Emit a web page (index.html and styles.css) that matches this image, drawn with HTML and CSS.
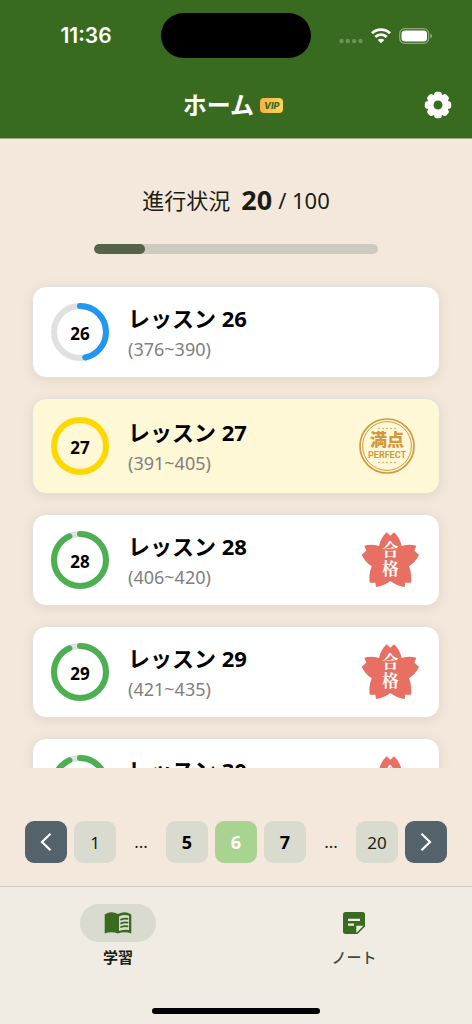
FILE: index.html
```html
<!DOCTYPE html>
<html lang="ja">
<head>
<meta charset="utf-8">
<meta name="viewport" content="width=device-width, initial-scale=1">
<title>ホーム</title>
<link rel="stylesheet" href="styles.css">
</head>
<body>
<svg class="defs" aria-hidden="true">
  <defs>
    <symbol id="flower" viewBox="16 20 180 180">
      <path fill="#e87062" d="M107 37L118 27Q135 42 141 68Q165 61 185 67L179 82L193 94Q184 115 163 129Q172 150 169 178L152 178L150 191Q126 188 107 173Q88 188 64 191L62 178L45 178Q42 150 51 129Q30 115 21 94L35 82L29 67Q49 61 73 68Q79 42 96 27Z"/>
      <text class="pass-text" x="107" y="99">合</text>
      <text class="pass-text" x="107" y="154">格</text>
    </symbol>
  </defs>
</svg>
<div class="app">
  <header class="header">
    <div class="status">
      <span class="time">11:36</span>
      <span class="island"></span>
      <span class="signals">
        <svg width="24" height="6" viewBox="0 0 24 6" fill="#6f9258"><circle cx="2.500" cy="3" r="2.200"/><circle cx="8.800" cy="3" r="2.200"/><circle cx="15.200" cy="3" r="2.200"/><circle cx="21.500" cy="3" r="2.200"/></svg>
        <svg class="wifi" width="20" height="16" viewBox="0 0 20 16" fill="none" stroke="#fff" stroke-width="2.800"><path d="M1 5.300a12.800 12.800 0 0 1 18 0M4.300 8.900a8.200 8.200 0 0 1 11.400 0"/><path d="M10 15.300L6.700 12a4.700 4.700 0 0 1 6.600 0Z" fill="#fff" stroke="none"/></svg>
        <svg width="34" height="16" viewBox="0 0 34 16"><rect x=".7" y=".7" width="29" height="14.600" rx="4.800" fill="none" stroke="#8cab7b" stroke-width="1.200"/><rect x="2.500" y="2.500" width="25.500" height="11" rx="3.200" fill="#fff"/><path d="M31.300 5.500a2.600 2.600 0 0 1 0 5Z" fill="#8cab7b"/></svg>
      </span>
    </div>
    <div class="titlebar">
      <span></span>
      <div class="title"><h1>ホーム</h1><span class="vip">VIP</span></div>
      <button class="settings" aria-label="設定">
        <svg width="28" height="28" viewBox="-14 -14 28 28"><g fill="#fff"><path fill-rule="evenodd" d="M-11 0a11 11 0 1 0 22 0a11 11 0 1 0-22 0M-4.500 0a4.500 4.500 0 1 1 9 0a4.500 4.500 0 1 1-9 0"/><rect id="tooth" x="-3.700" y="-13.200" width="7.400" height="6" rx="2.500"/><use href="#tooth" transform="rotate(45)"/><use href="#tooth" transform="rotate(90)"/><use href="#tooth" transform="rotate(135)"/><use href="#tooth" transform="rotate(180)"/><use href="#tooth" transform="rotate(225)"/><use href="#tooth" transform="rotate(270)"/><use href="#tooth" transform="rotate(315)"/></g></svg>
      </button>
    </div>
  </header>

  <main class="main">
    <section class="progress">
      <label class="progress-label" for="total"><span>進行状況</span><strong>20</strong><span>/ 100</span></label>
      <progress id="total" class="bar" max="100" value="18"></progress>
    </section>

    <ul class="lessons">
      <li class="card">
        <div class="ring"><svg viewBox="0 0 58 58"><circle class="track" cx="29" cy="29" r="26"/><circle class="arc blue" cx="29" cy="29" r="26" pathLength="100" stroke-dasharray="46.700 100"/></svg><span>26</span></div>
        <div class="info"><h2>レッスン 26</h2><p>(376~390)</p></div>
      </li>
      <li class="card perfect">
        <div class="ring"><svg viewBox="0 0 58 58"><circle class="arc gold" cx="29" cy="29" r="26"/></svg><span>27</span></div>
        <div class="info"><h2>レッスン 27</h2><p>(391~405)</p></div>
        <svg class="stamp" viewBox="0 0 60 60" role="img" aria-label="満点">
          <circle cx="30" cy="30" r="27" fill="none" stroke="#d3993f" stroke-width="1.700"/>
          <circle cx="30" cy="30" r="24.400" fill="none" stroke="#d3993f" stroke-width="1"/>
          <path d="M22 12.500h16.100M22 46.500h16.100" stroke="#d3993f" stroke-width="1.600" stroke-linecap="round" stroke-dasharray="0 4"/>
          <text class="perfect-text" x="30" y="30">満点</text>
          <text class="perfect-sub" x="30" y="42">PERFECT</text>
        </svg>
      </li>
      <li class="card">
        <div class="ring"><svg viewBox="0 0 58 58"><circle class="track" cx="29" cy="29" r="26"/><circle class="arc green" cx="29" cy="29" r="26" pathLength="100" stroke-dasharray="93.300 100"/></svg><span>28</span></div>
        <div class="info"><h2>レッスン 28</h2><p>(406~420)</p></div>
        <svg class="stamp pass" role="img" aria-label="合格"><use href="#flower"/></svg>
      </li>
      <li class="card">
        <div class="ring"><svg viewBox="0 0 58 58"><circle class="track" cx="29" cy="29" r="26"/><circle class="arc green" cx="29" cy="29" r="26" pathLength="100" stroke-dasharray="93.300 100"/></svg><span>29</span></div>
        <div class="info"><h2>レッスン 29</h2><p>(421~435)</p></div>
        <svg class="stamp pass" role="img" aria-label="合格"><use href="#flower"/></svg>
      </li>
      <li class="card">
        <div class="ring"><svg viewBox="0 0 58 58"><circle class="track" cx="29" cy="29" r="26"/><circle class="arc green" cx="29" cy="29" r="26" pathLength="100" stroke-dasharray="93.300 100"/></svg><span>30</span></div>
        <div class="info"><h2>レッスン 30</h2><p>(436~450)</p></div>
        <svg class="stamp pass" role="img" aria-label="合格"><use href="#flower"/></svg>
      </li>
    </ul>

    <nav class="pager" aria-label="ページ">
      <button class="page arrow" aria-label="前へ"><svg width="12" height="20" viewBox="0 0 12 20"><path d="M10.500 1.700L2 10l8.500 8.300"/></svg></button>
      <button class="page">1</button>
      <span class="dots">...</span>
      <button class="page near">5</button>
      <button class="page near current" aria-current="page">6</button>
      <button class="page near">7</button>
      <span class="dots">...</span>
      <button class="page">20</button>
      <button class="page arrow" aria-label="次へ"><svg width="12" height="20" viewBox="0 0 12 20"><path d="M1.500 1.700L10 10l-8.500 8.300"/></svg></button>
    </nav>
  </main>

  <footer class="footer">
    <nav class="tabs">
      <a class="tab active" href="#study">
        <span class="pill"><svg width="28" height="24" viewBox="0 0 28 24"><path fill="#386b1f" d="M.7 3.500Q7-.5 14 3Q21-.5 27.300 3.500V22.500Q20.500 19.800 14 22.500Q7.500 19.800.7 22.500Z"/><path fill="#d9dbcf" d="M15 5.500Q20 3 25 4.800V19Q20 18 15 20Z"/><path fill="none" stroke="#386b1f" stroke-width="1.800" stroke-linecap="round" d="M17 8.600Q20 7.300 23.500 7.900M17 12.300Q20 11 23.500 11.600M17 16Q20 14.700 23.500 15.300"/></svg></span>
        <span>学習</span>
      </a>
      <a class="tab" href="#notes">
        <span class="pill"><svg width="24" height="24" viewBox="0 0 24 24"><path fill="#386b1f" d="M3.500 1h17Q23 1 23 3.500V15.500L15.500 23h-12Q1 23 1 20.500v-17Q1 1 3.500 1Z"/><path fill="none" stroke="#f0ece3" stroke-width="2.300" d="M6 8.800h12M6 13.700h6"/><path fill="#f0ece3" d="M14.300 14.700h7.200L14.300 22Z"/></svg></span>
        <span>ノート</span>
      </a>
    </nav>
    <div class="home-indicator"></div>
  </footer>
</div>
</body>
</html>
```

FILE: styles.css
```css
* { box-sizing: border-box; }
body {
  margin: 0;
  background: #f4e8dc;
  color: #1a1c16;
  font-family: "Noto Sans", "Noto Sans CJK JP", sans-serif;
}
h1, h2, p, ul { margin: 0; padding: 0; }
button { border: 0; padding: 0; font: inherit; color: inherit; background: none; }
svg { display: block; }
.defs { position: absolute; width: 0; height: 0; }
.app { display: flex; flex-direction: column; height: 100vh; }

.header { background: #386b1f; color: #fff; border-bottom: 1px solid #a3a889; }
.status {
  display: grid;
  grid-template-columns: 1fr 150px 1fr;
  align-items: center;
  padding-top: 13px;
}
.time { justify-self: center; padding-left: 11px; font: 600 21px/24px Inter, sans-serif; }
.island { height: 45px; border-radius: 23px; background: #000; }
.signals { display: flex; align-items: center; justify-content: flex-end; gap: 8px; padding-right: 39px; }
.signals svg:first-child { margin-top: 10px; }
.titlebar {
  display: grid;
  grid-template-columns: 1fr auto 1fr;
  align-items: center;
  padding: 31px 20px 17px;
}
.title { display: flex; align-items: center; gap: 6px; margin-right: 6px; }
.title h1 { font-size: 24px; line-height: 32px; font-weight: 700; }
.vip {
  padding: 0 4px;
  border-radius: 4px;
  background: linear-gradient(90deg, #ffae42, #ffd75a);
  color: #386b1f;
  font: italic 800 9px/15px Inter, sans-serif;
}
.settings { justify-self: end; }

.main { flex: 1; min-height: 0; display: flex; flex-direction: column; }
.progress { display: flex; flex-direction: column; align-items: center; gap: 28px; padding: 45px 0 16px; }
.progress-label { display: flex; align-items: center; font-size: 22px; line-height: 32px; gap: 6px; }
.progress-label strong { font-size: 27px; padding-left: 5px; }
.bar {
  appearance: none;
  display: block;
  width: 60%;
  height: 10px;
  border: 0;
  border-radius: 5px;
  overflow: hidden;
  background: #cfcabf;
}
.bar::-webkit-progress-bar { background: #cfcabf; }
.bar::-webkit-progress-value { background: #55624c; border-radius: 5px; }

.lessons {
  flex: 1;
  min-height: 0;
  overflow: hidden;
  list-style: none;
  display: flex;
  flex-direction: column;
  gap: 20px;
  padding: 16px 32px 0;
}
.card {
  flex: none;
  display: flex;
  align-items: center;
  gap: 19px;
  padding: 16px 20px 16px 18px;
  border: 1px solid #e4e2df;
  border-radius: 14px;
  background: #fff;
  box-shadow: 0 2px 12px rgba(70, 50, 20, .1);
}
.card.perfect { background: #fff8d6; padding-top: 18px; padding-bottom: 18px; }
.ring { display: grid; width: 58px; height: 58px; }
.ring svg, .ring span { grid-area: 1 / 1; }
.ring span { place-self: center; padding-top: 4px; color: #000; font-size: 17px; line-height: 20px; font-weight: 700; }
.track, .arc { fill: none; stroke-width: 6; stroke: #e0e0e0; }
.arc { stroke-linecap: round; transform: rotate(-90deg); transform-origin: center; }
.blue { stroke: #2196f3; }
.gold { stroke: #ffd700; }
.green { stroke: #4caf50; }
.info { flex: 1; margin: -1px 0; }
.info h2 { color: #000; font-size: 22px; line-height: 32px; font-weight: 700; }
.info p { color: #808080; font-size: 18px; line-height: 26px; padding-top: 2px; }
.stamp { width: 60px; height: 60px; margin: -2px 2px -2px 0; overflow: visible; }
.stamp.pass { margin-right: -1px; }
.perfect-text { fill: #d3993f; font: 900 17px "Noto Sans CJK JP", sans-serif; text-anchor: middle; }
.perfect-sub { fill: #d3993f; font: 700 9px Roboto, sans-serif; text-anchor: middle; }
.pass-text { fill: #fff; font: 700 50px "Noto Serif CJK JP", "Noto Sans CJK JP", serif; text-anchor: middle; }

.pager { display: flex; justify-content: center; align-items: center; gap: 7px; padding: 53px 16px 23px; }
.page {
  display: grid;
  place-items: center;
  width: 42px;
  height: 42px;
  border-radius: 9px;
  background: #d9dbcf;
  font-size: 17px;
}
.page.near { color: #000; font-size: 18px; font-weight: 700; }
.page.current { background: #a9d391; color: #fff; }
.page.arrow { background: #53626b; }
.page.arrow path { fill: none; stroke: #fff; stroke-width: 2.2; }
.dots { width: 36px; text-align: center; line-height: 42px; font-size: 17px; }

.footer { background: #f0ece3; border-top: 1px solid #d3cdc0; padding: 17px 0 10px; }
.tabs { display: grid; grid-template-columns: 1fr 1fr; }
.tab {
  display: flex;
  flex-direction: column;
  align-items: center;
  gap: 4px;
  color: #43483e;
  font-size: 15px;
  line-height: 22px;
  font-weight: 500;
  text-decoration: none;
}
.pill { display: grid; place-items: center; width: 76px; height: 38px; border-radius: 19px; }
.active { color: #1a1c16; font-weight: 700; }
.active .pill { background: #d9dbcf; }
.home-indicator { width: 168px; height: 6px; margin: 40px auto 0; border-radius: 3px; background: #000; }
```
